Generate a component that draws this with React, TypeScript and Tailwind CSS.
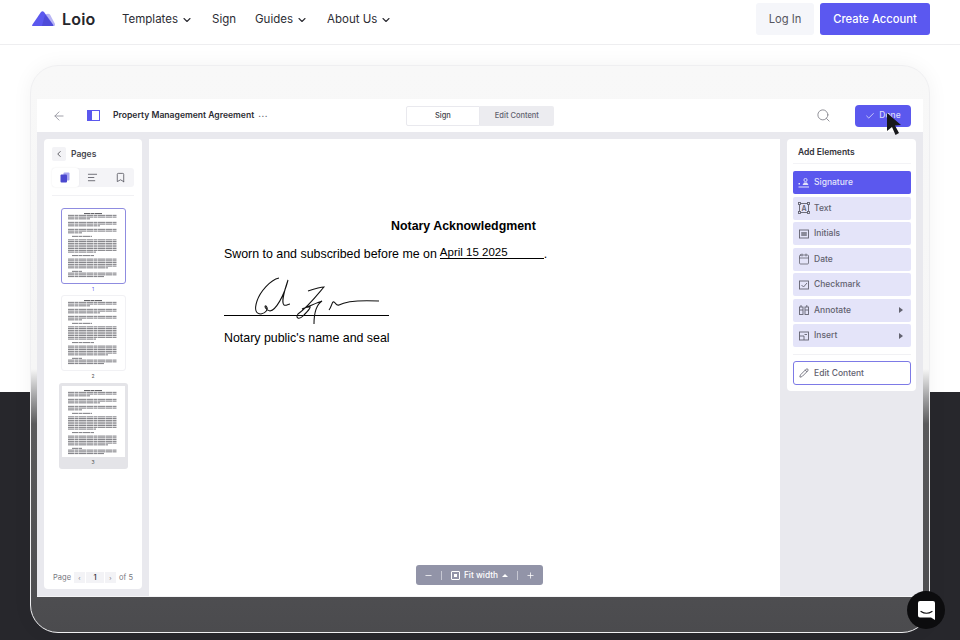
import React from "react";
import { ChevronDown, ArrowLeft, Search, Check, ChevronLeft, AlignLeft, Bookmark, Calendar, Pencil, Minus, Plus } from "lucide-react";

const font = { fontFamily: "Inter, 'Liberation Sans', sans-serif" };

function Logo() {
  return (
    <svg width="24" height="16" viewBox="0 0 24 16">
      <path d="M13 4 Q16 2 18 3.5 L23 13 Q23.5 15 22 15 L16 15 Z" fill="#b9b6f5" />
      <path d="M9 1 Q10.5 -0.5 12 1 L21 13.5 Q22 15 20.5 15 L1 15 Q-0.5 15 0.5 13.5 Z" fill="#5b58ee" />
      <path d="M13 3.5 L21 14 Q21.5 15 20.5 15 L10 15 Z" fill="#4340c4" opacity="0.5" />
    </svg>
  );
}

function NavItem({ label, caret }: { label: string; caret?: boolean }) {
  return (
    <div className="flex items-center gap-[3px] text-[11.5px] text-[#2c2c33]">
      <span>{label}</span>
      {caret && <ChevronDown size={12} strokeWidth={2.2} />}
    </div>
  );
}

const lines = [
  [16, 34], [0, 49], [0, 49], [0, 22], [0, 0], [0, 49], [0, 49], [0, 32], [0, 0], [0, 49], [0, 49], [0, 14], [0, 0], [4, 24], [0, 0],
  [0, 49], [0, 49], [0, 49], [0, 49], [0, 49], [0, 49], [0, 49], [0, 28], [0, 0], [4, 26], [0, 0], [0, 49], [0, 49], [0, 49], [0, 49], [0, 49], [0, 40], [0, 0], [4, 14], [0, 49], [0, 49], [0, 36],
];

function Thumb() {
  return (
    <svg width="50" height="66" viewBox="0 0 50 66" className="block">
      {lines.map(([x, w], i) =>
        w === 0 ? null : (
          <line
            key={i}
            x1={x}
            x2={x === 16 ? 34 : w}
            y1={i * 1.75 + 0.6}
            y2={i * 1.75 + 0.6}
            stroke={i === 0 ? "#55555a" : "#7b7b80"}
            strokeWidth="1"
            strokeDasharray="6 0.5 3.5 0.5 8 0.5"
          />
        ),
      )}
    </svg>
  );
}

function PageThumb({ n, state }: { n: number; state: "active" | "plain" | "hover" }) {
  if (state === "hover") {
    return (
      <div className="w-[69px] h-[86px] bg-[#e4e4e8] rounded-[3px] flex flex-col items-center pt-[3px] mt-[1px]">
        <div className="w-[63px] h-[71px] bg-white flex justify-center pt-[4px]"><Thumb /></div>
        <div className="text-[5px] leading-[11px] text-[#555]">{n}</div>
      </div>
    );
  }
  return (
    <div className="flex flex-col items-center">
      <div className={`w-[65px] h-[76px] rounded-[3px] bg-white flex justify-center pt-[4px] ${state === "active" ? "border border-[#8f8ce0]" : "border border-[#f1f1f4]"}`}>
        <Thumb />
      </div>
      <div className={`text-[5px] leading-[11px] ${state === "active" ? "text-[#5b58ee]" : "text-[#555]"}`}>{n}</div>
    </div>
  );
}

function Ico({ children }: { children: React.ReactNode }) {
  return (
    <svg width="12" height="12" viewBox="0 0 12 12" fill="none" stroke="currentColor" strokeWidth="0.9">
      {children}
    </svg>
  );
}

function ElementRow({ icon, label, active, arrow }: { icon: React.ReactNode; label: string; active?: boolean; arrow?: boolean }) {
  return (
    <div className={`h-[23px] rounded-[2px] flex items-center pl-[5px] pr-[8px] gap-[4px] text-[8.5px] font-medium ${active ? "bg-[#5b58ee] text-[#e4e4fb]" : "bg-[#e4e4f9] text-[#62626f]"}`}>
      <span className="w-[12px] h-[12px] flex items-center justify-center">{icon}</span>
      <span className="flex-1">{label}</span>
      {arrow && <span className="w-0 h-0 border-y-[3px] border-y-transparent border-l-[4px] border-l-[#62626f]" />}
    </div>
  );
}

export default function App() {
  return (
    <div className="w-[960px] h-[640px] overflow-hidden flex flex-col relative bg-white" style={font}>
      <header className="h-[45px] shrink-0 border-b border-[#eeeef0] flex items-center pl-[32px] pr-[30px] pb-[6px] bg-white">
        <div className="flex items-center gap-[6px] w-[90px]">
          <Logo />
          <span className="text-[16px] font-semibold text-[#26262c] tracking-[0.2px]">Loio</span>
        </div>
        <nav className="flex items-center gap-[19px] pt-[1px]">
          <NavItem label="Templates" caret />
          <NavItem label="Sign" />
          <NavItem label="Guides" caret />
          <NavItem label="About Us" caret />
        </nav>
        <div className="ml-auto flex items-center gap-[6px]">
          <div className="w-[58px] h-[32px] rounded-[3px] bg-[#f5f6fa] text-[#55555e] text-[11.2px] flex items-center justify-center">Log In</div>
          <div className="w-[110px] h-[32px] rounded-[3px] bg-[#5b58f0] text-white text-[11.2px] font-medium flex items-center justify-center">Create Account</div>
        </div>
      </header>

      <main className="flex-1 px-[30px] pt-[20px] bg-[linear-gradient(#ffffff_347px,#27272c_347px)]">
        <div className="w-[900px] h-[568px] rounded-[28px] border border-[#efeff1] px-[6px] pt-[33px] bg-[linear-gradient(#f8f8f8_0px,#f6f6f6_303px,#a0a0a2_332px,#5a5a5c_358px,#4b4b4e_100%)] shadow-[0_0_20px_rgba(0,0,0,0.05)]">
          <div className="h-[498px] flex flex-col overflow-hidden bg-[#e9e9ee] border-b border-[#f4f4f6]">
            <div className="h-[33px] shrink-0 bg-white flex items-center pl-[15px] pr-[12px] relative">
              <ArrowLeft size={14} className="text-[#9a9aa4]" strokeWidth={1.6} />
              <div className="w-[13px] h-[11px] ml-[21px] border border-[#5b58ee] flex"><div className="w-[4px] bg-[#5b58ee]" /></div>
              <span className="ml-[13px] text-[8.6px] font-semibold text-[#2c2c33]">Property Management Agreement</span>
              <span className="ml-[4px] text-[8.5px] font-semibold text-[#55555e] tracking-[0.5px] -mt-[3px]">...</span>
              <div className="ml-[138px] flex h-[20px]">
                <div className="w-[74px] bg-white border border-[#e9e9ee] rounded-l-[2px] text-[7.5px] font-medium text-[#44444c] flex items-center justify-center">Sign</div>
                <div className="w-[74px] bg-[#ececf0] rounded-r-[2px] text-[7.5px] font-medium text-[#62626f] flex items-center justify-center">Edit Content</div>
              </div>
              <Search size={15} strokeWidth={1.5} className="ml-auto mr-[24px] text-[#8b8b92]" />
              <div className="w-[56px] h-[22px] rounded-[4px] bg-[#5b58ee] text-[#dcdcfb] text-[8.5px] font-medium flex items-center justify-center gap-[4px] relative">
                <Check size={10} strokeWidth={2} />
                <span>Done</span>
                <svg className="absolute left-[31px] top-[8px]" width="16" height="22" viewBox="0 0 16 22">
                  <path d="M1 0 L15 12 L9 12.5 L13 20 L9.5 22 L6 14 L1 18 Z" fill="#17171b" />
                </svg>
              </div>
            </div>

            <div className="flex-1 flex min-h-0">
              <aside className="w-[112px] shrink-0 pl-[7px] pt-[7px] pb-[7px]">
                <div className="w-[98px] h-full bg-white rounded-[4px] flex flex-col items-center relative px-[8px]">
                  <div className="self-start flex items-center gap-[5px] mt-[8px]">
                    <div className="w-[14px] h-[14px] rounded-[2px] bg-[#f3f3f6] flex items-center justify-center">
                      <ChevronLeft size={10} strokeWidth={2} className="text-[#44444c]" />
                    </div>
                    <span className="text-[8.5px] font-semibold text-[#44444c]">Pages</span>
                  </div>
                  <div className="mt-[7px] w-full h-[19px] bg-[#f4f4f7] rounded-[3px] flex">
                    <div className="w-[27px] bg-white rounded-[3px] shadow-[0_0_2px_rgba(0,0,0,0.08)] flex items-center justify-center text-[#4b48cf]">
                      <svg width="10" height="11" viewBox="0 0 10 11"><rect x="3.5" y="0.5" width="6" height="8" rx="1" fill="#a9a7ee" /><rect x="0.5" y="2.5" width="6.5" height="8" rx="1" fill="#4b48cf" /></svg>
                    </div>
                    <div className="w-[28px] flex items-center justify-center text-[#66666e]"><AlignLeft size={11} /></div>
                    <div className="w-[28px] flex items-center justify-center text-[#66666e]"><Bookmark size={11} /></div>
                  </div>
                  <div className="w-full h-px bg-[#f1f1f4] mt-[8px]" />
                  <div className="mt-[12px] flex flex-col items-center">
                    <PageThumb n={1} state="active" />
                    <PageThumb n={2} state="plain" />
                    <PageThumb n={3} state="hover" />
                  </div>
                  <div className="mt-auto mb-[6px] flex items-center text-[7.5px] text-[#77777f] h-[11px]">
                    <span className="mr-[3px]">Page</span>
                    <span className="w-[11px] h-[11px] bg-[#f3f3f6] flex items-center justify-center text-[6px] mr-[1px]">‹</span>
                    <span className="w-[18px] h-[11px] bg-[#f3f3f6] flex items-center justify-center text-[#33333a] font-medium mr-[1px]">1</span>
                    <span className="w-[11px] h-[11px] bg-[#f3f3f6] flex items-center justify-center text-[6px] mr-[3px]">›</span>
                    <span>of 5</span>
                  </div>
                </div>
              </aside>

              <section className="w-[631px] shrink-0 mt-[7px] bg-white relative flex flex-col text-black text-[12.4px]" style={{ fontFamily: "'Liberation Sans', Arial, sans-serif" }}>
                <div className="pt-[79px] pl-[242px] font-bold leading-[16px]">Notary Acknowledgment</div>
                <div className="pl-[75px] mt-[12px] leading-[16px] flex">
                  <span>Sworn to and subscribed before me on</span>
                  <span className="ml-[3px] w-[104px] h-[13px] border-b border-black text-[11.5px] leading-[13px]">April 15 2025</span>
                  <span>.</span>
                </div>
                <div className="ml-[75px] mt-[14px] w-[165px] h-[40px] border-b border-black">
                  <svg width="165" height="50" viewBox="0 0 165 50" fill="none" stroke="#111" strokeWidth="1.05" className="overflow-visible">
                    <path d="M55 2 C46 4 36 16 33 25 C30 34 32 38 37 38 C42 37 45 33 42 30 C40 29 41 34 46 35 C52 34 60 20 64 4 C60 16 57 26 60 29 C62 30 64 28 66 28" />
                    <path d="M84 15 C90 13 96 11 100 11 C94 18 84 31 74 38 C71 42 75 44 79 40 C85 34 88 30 85 31 C82 31 78 33 78 33 C84 31 92 27 98 25 C92 29 90 38 90 48" />
                    <path d="M105 34 C108 30 108 25 110 26 C112 27 112 30 115 29 C122 25 135 24 155 25" />
                  </svg>
                </div>
                <div className="ml-[75px] mt-[14px] leading-[16px]">Notary public's name and seal</div>
                <div className="mt-auto ml-[267px] mb-[11px] w-[127px] h-[20px] rounded-[3px] bg-[#9294a8] text-white text-[8.3px] font-medium flex items-center justify-between px-[8px]" style={font}>
                  <Minus size={9} />
                  <span className="w-px h-[9px] bg-[#c7c8d3]" />
                  <span className="flex items-center gap-[4px]">
                    <span className="w-[9px] h-[9px] border border-white rounded-[1px] flex items-center justify-center"><span className="w-[3px] h-[3px] bg-white" /></span>
                    Fit width
                    <span className="w-0 h-0 border-x-[3px] border-x-transparent border-b-[3px] border-b-white" />
                  </span>
                  <span className="w-px h-[9px] bg-[#c7c8d3]" />
                  <Plus size={9} />
                </div>
              </section>

              <aside className="flex-1 pl-[7px] pt-[7px]">
                <div className="w-[129px] h-[252px] bg-white rounded-[4px] pl-[6px] pr-[5px]">
                  <div className="h-[25px] pl-[5px] pt-[2px] flex items-center text-[8.5px] font-semibold text-[#33333a] border-b border-[#f3f3f6]">Add Elements</div>
                  <div className="mt-[7px] flex flex-col gap-[2.5px]">
                    <ElementRow active label="Signature" icon={<svg width="12" height="10" viewBox="0 0 12 10"><circle cx="7.5" cy="2" r="1.6" fill="none" stroke="currentColor" strokeWidth="0.9" /><path d="M4.5 7 L6 4.5 H9 L10.5 7 Z M0.5 5 H2 V6.5 H0.5 Z M0.5 8.5 H11 V9.5 H0.5 Z" fill="currentColor" /></svg>} />
                    <ElementRow label="Text" icon={<Ico><rect x="1.5" y="1.5" width="9" height="9" /><rect x="0.5" y="0.5" width="2" height="2" fill="#e4e4f9" /><rect x="9.5" y="0.5" width="2" height="2" fill="#e4e4f9" /><rect x="0.5" y="9.5" width="2" height="2" fill="#e4e4f9" /><rect x="9.5" y="9.5" width="2" height="2" fill="#e4e4f9" /><text x="6" y="8.6" fontSize="7" textAnchor="middle" fill="currentColor" stroke="none" fontWeight="600">A</text></Ico>} />
                    <ElementRow label="Initials" icon={<Ico><rect x="1.5" y="2" width="9" height="8" /><rect x="3.2" y="4" width="5.6" height="4" fill="currentColor" stroke="none" opacity="0.7" /></Ico>} />
                    <ElementRow label="Date" icon={<Calendar size={12} strokeWidth={1.6} />} />
                    <ElementRow label="Checkmark" icon={<Ico><rect x="1.5" y="2" width="9" height="8" /><path d="M3.5 6 L5.5 8 L9 4" /></Ico>} />
                    <ElementRow label="Annotate" arrow icon={<Ico><rect x="1.5" y="3" width="3.5" height="7.5" /><rect x="7" y="3" width="3.5" height="7.5" /><path d="M3 1 V3 M8.8 1 V3 M1.5 6 H5 M7 6 H10.5" /></Ico>} />
                    <ElementRow label="Insert" arrow icon={<Ico><rect x="1.5" y="2" width="9" height="8" /><path d="M1.5 6 H6 V10 M6.5 4.5 H9" /></Ico>} />
                  </div>
                  <div className="h-px bg-[#f1f1f4] mt-[7px]" />
                  <div className="mt-[6px] h-[24px] rounded-[3px] border-[1.5px] border-[#7d7ae6] text-[#62626f] text-[8.5px] font-medium flex items-center gap-[5px] pl-[5px]">
                    <Pencil size={10} />
                    Edit Content
                  </div>
                </div>
              </aside>
            </div>
          </div>
        </div>
      </main>

      <div className="absolute left-[907px] top-[591px] w-[38px] h-[38px] rounded-full bg-[#0c0c0e] flex items-center justify-center">
        <svg width="17" height="19" viewBox="0 0 17 19">
          <path d="M2 0 H15 Q17 0 17 2 V19 L13 16.5 H2 Q0 16.5 0 14.5 V2 Q0 0 2 0 Z" fill="#fff" />
          <path d="M3 10.5 Q8.5 14 14 10.5" fill="none" stroke="#0c0c0e" strokeWidth="1.2" strokeLinecap="round" />
        </svg>
      </div>
    </div>
  );
}
